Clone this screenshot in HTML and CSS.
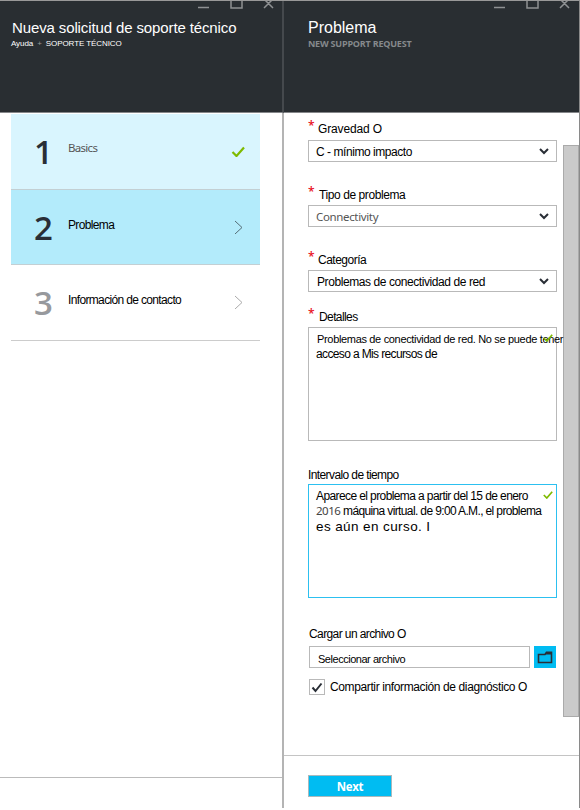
FILE: index.html
```html
<!DOCTYPE html>
<html lang="es">
<head>
<meta charset="utf-8">
<title>Nueva solicitud de soporte técnico</title>
<link rel="stylesheet" href="styles.css">
</head>
<body>
<div class="portal">
  <section class="blade blade-steps">
    <header class="blade-header">
      <svg class="window-controls" width="78" height="10" viewBox="0 0 78 10"><path d="M0 6.500h11M33 0v7h11V0M66 7l9-9M75 7l-9-9"/></svg>
      <h1><span class="t-title">Nueva solicitud de soporte técnico</span></h1>
      <p class="crumbs"><span class="t-help">Ayuda</span> <span class="plus">+</span> <span class="t-support">SOPORTE TÉCNICO</span></p>
    </header>
    <ol class="steps">
      <li class="step step-done"><span class="number">1</span><span class="step-label latin">Basics</span>
        <svg class="mark" width="14" height="12" viewBox="0 0 14 12"><path class="tick" d="M1.500 7l4 4L13 2.500"/></svg></li>
      <li class="step step-current"><span class="number">2</span><span class="step-label t-problem">Problema</span>
        <svg class="mark" width="14" height="14" viewBox="0 0 14 14"><path class="arrow" d="M4 1l7 6.500-7 6.500"/></svg></li>
      <li class="step step-next"><span class="number">3</span><span class="step-label t-contact">Información de contacto</span>
        <svg class="mark" width="14" height="14" viewBox="0 0 14 14"><path class="arrow" d="M4 1l7 6.500-7 6.500"/></svg></li>
    </ol>
    <footer class="steps-footer"></footer>
  </section>
  <section class="blade blade-form">
    <header class="blade-header">
      <svg class="window-controls" width="78" height="10" viewBox="0 0 78 10"><path d="M0 6.500h11M33 0v7h11V0M66 7l9-9M75 7l-9-9"/></svg>
      <h1><span class="t-head">Problema</span></h1>
      <p class="subtitle">NEW SUPPORT REQUEST</p>
    </header>
    <div class="form-body">
      <form class="form">
        <div class="label label-severity"><i>*</i><span class="t-severity">Gravedad O</span></div>
        <div class="select"><span class="t-impact">C - mínimo impacto</span><svg width="10" height="7" viewBox="0 0 10 7"><path d="M1 1l4 4 4-4"/></svg></div>
        <div class="label label-type"><i>*</i><span class="t-type">Tipo de problema</span></div>
        <div class="select"><span class="connectivity">Connectivity</span><svg width="10" height="7" viewBox="0 0 10 7"><path d="M1 1l4 4 4-4"/></svg></div>
        <div class="label label-category"><i>*</i><span class="t-category">Categoría</span></div>
        <div class="select"><span class="t-network">Problemas de conectividad de red</span><svg width="10" height="7" viewBox="0 0 10 7"><path d="M1 1l4 4 4-4"/></svg></div>
        <div class="label label-details"><i>*</i><span class="t-details">Detalles</span></div>
        <div class="textbox textbox-details">
          <svg class="valid" width="10" height="8" viewBox="0 0 10 8"><path class="tick" d="M.8 4l3 3L9.200.8"/></svg>
          <p><span class="t-line1">Problemas de conectividad de red. No se puede tener</span></p>
          <p><span class="t-line2">acceso a Mis recursos de</span></p>
        </div>
        <div class="label label-time"><span class="t-time">Intervalo de tiempo</span></div>
        <div class="textbox textbox-time">
          <svg class="valid" width="10" height="8" viewBox="0 0 10 8"><path class="tick" d="M.8 4l3 3L9.200.8"/></svg>
          <p><span class="t-line3">Aparece el problema a partir del 15 de enero</span></p>
          <p><span class="year">2016</span><span class="t-line4"> máquina virtual. de 9:00 A.M., el problema</span></p>
          <p><span class="t-line5">es aún en curso. I</span></p>
        </div>
        <div class="label label-file"><span class="t-file">Cargar un archivo O</span></div>
        <div class="file-row">
          <div class="file-input"><span class="t-choose">Seleccionar archivo</span></div>
          <div class="folder"><svg width="16" height="13" viewBox="0 0 16 13"><path d="M1.500 3.500h6.500l1.500-2.300h5v10.300h-13z"/><path class="tab" d="M8.500 3.500L10 1h4.500v2.500z"/></svg></div>
        </div>
        <div class="share-row">
          <div class="checkbox"><svg width="12" height="11" viewBox="0 0 12 11"><path d="M1.500 5.500l3 3.500L10.500 1.500"/></svg></div>
          <span class="t-share">Compartir información de diagnóstico O</span>
        </div>
      </form>
      <div class="scrollbar"></div>
    </div>
    <footer class="form-footer"><div class="next">Next</div></footer>
  </section>
</div>
</body>
</html>
```
FILE: styles.css
```css
* { box-sizing: border-box; }
body { margin: 0; background: #fff; color: #000; font: 12px/16px "Liberation Sans", Arial, sans-serif; }
h1, p, ol { margin: 0; padding: 0; }
svg { display: block; fill: none; flex: none; }
.portal { display: flex; width: 580px; height: 808px; border-top: 1px solid #999; border-right: 1px solid #8a8a8a; white-space: nowrap; }
.blade { display: flex; flex-direction: column; }
.blade-steps { width: 284px; border-right: 2px solid #b4b4b4; }
.blade-form { width: 295px; }
.blade-header { position: relative; flex: none; height: 112px; padding: 17px 0 0 12px; background: #292e32; border-bottom: 1px solid #85878a; color: #fff; }
.blade-steps .blade-header { width: 284px; border-right: 2px solid #45494d; }
.blade-form .blade-header { padding-left: 24px; }
.window-controls { position: absolute; top: 0; right: 6px; stroke: #8e9193; stroke-width: 1.500; }
.blade-form .window-controls { right: 7px; }
h1 { font-size: 15px; line-height: 20px; font-weight: 400; }
.blade-form h1 { font-size: 16px; }
.crumbs { margin-left: -1px; font-size: 8px; line-height: 12px; display: flex; }
.plus { margin: 0 4px; color: #999; }
.subtitle { color: #85898c; font: 700 9px/12px "Open Sans", sans-serif; letter-spacing: -.2px; }
.steps { list-style: none; width: 249px; margin: 1px 0 0 11px; flex: 1; }
.step { display: flex; height: 75.500px; padding-right: 15px; border-bottom: 1px solid #c3cfd3; }
.step-done { background: #d9f5fe; }
.step-current { background: #b3ebfb; }
.step-next { border-color: #ccc; }
.step-next .number { color: #97999d; }
.number { width: 57px; padding-left: 23px; font: 600 33px/76px "Open Sans", sans-serif; color: #292e36; }
.step-label { flex: 1; padding-top: 27px; font-size: 12px; line-height: 16px; }
.step-label.latin { font-family: "Noto Sans", sans-serif; font-size: 11.500px; line-height: 14px; letter-spacing: -.7px; color: #555; }
.mark { align-self: center; }
.tick { stroke: #7fba00; stroke-width: 2.200; }
.valid .tick { stroke-width: 1.700; }
.arrow { stroke: #556d76; }
.step-next .arrow { stroke: #aaa; }
.steps-footer { height: 31px; border-top: 1px solid #bbb; }
.form-body { display: flex; flex: 1; justify-content: space-between; }
.form { width: 249px; margin-left: 24px; }
.scrollbar { width: 16px; height: 572px; margin-top: 32px; background: #cacaca; border: 1px solid #aaa; }
.label { display: flex; line-height: 16px; }
.label i { width: 10px; margin-top: -3px; color: #e81123; font: 600 12px/16px "Open Sans", sans-serif; }
.label-severity { height: 27px; padding-top: 8px; }
.label-type { height: 43px; padding-top: 25px; }
.label-category { height: 43px; padding-top: 25px; }
.label-details { height: 35px; padding-top: 17px; }
.label-time { height: 43px; padding-top: 26px; }
.label-file { height: 48px; padding: 28px 0 0 1px; }
.select { display: flex; align-items: center; justify-content: space-between; height: 22px; padding: 1px 7px 0 7px; border: 1px solid #b9b9b9; }
.select svg { stroke: #292e36; stroke-width: 2; }
.connectivity { font-family: "Noto Sans", sans-serif; font-size: 11.500px; letter-spacing: -.35px; color: #555; }
.textbox { position: relative; height: 114px; padding: 4px 0 0 7px; border: 1px solid #b9b9b9; }
.textbox p { height: 15px; line-height: 15px; }
.textbox-time { border-color: #2cc0f0; }
.valid { position: absolute; top: 6px; right: 3px; }
.year { font-family: "Noto Sans", sans-serif; font-size: 11.500px; line-height: 1; letter-spacing: -.5px; color: #444; }
.file-row { display: flex; justify-content: space-between; padding: 0 1px; }
.file-input { width: 221px; height: 22px; padding: 4px 0 0 8px; border: 1px solid #b9b9b9; }
.folder { display: grid; place-items: center; width: 22px; height: 22px; background: #00bcf2; }
.folder svg { stroke: #292e36; stroke-width: 1.600; }
.folder .tab { fill: #292e36; stroke: none; }
.share-row { display: flex; gap: 5px; padding: 11px 0 0 1px; }
.checkbox { display: grid; place-items: center; width: 16px; height: 16px; border: 1px solid #b9b9b9; }
.checkbox svg { stroke: #292e36; stroke-width: 2; }
.form-footer { height: 53px; padding: 19px 0 0 24px; border-top: 1px solid #c4c4c4; }
.next { width: 84px; height: 22px; background: #00bcf2; border: 1px solid #a9b9bd; color: #fff; text-align: center; font: 700 11.500px/21px "Open Sans", sans-serif; letter-spacing: -.3px; }

/* Per-string tracking */
.t-title { letter-spacing: -.12px; }
.t-help, .t-support { letter-spacing: -.08px; }
.t-problem { letter-spacing: -.65px; }
.t-contact { letter-spacing: -.65px; }
.t-severity { letter-spacing: -.15px; }
.t-impact { letter-spacing: -.45px; }
.t-type { letter-spacing: -.42px; margin-left: 1px; }
.t-category { letter-spacing: -.5px; }
.t-network { letter-spacing: -.42px; margin-left: 1px; }
.t-details { letter-spacing: -.6px; margin-left: 1px; }
.t-line1 { font-size: 11px; letter-spacing: -.33px; margin-left: 1px; }
.t-line2 { letter-spacing: -.63px; }
.t-time { letter-spacing: -.6px; }
.t-line3 { letter-spacing: -.6px; }
.t-line4 { letter-spacing: -.63px; }
.t-line5 { font-size: 13.500px; letter-spacing: .4px; }
.t-file { letter-spacing: -.6px; }
.t-choose { font-size: 11px; letter-spacing: -.47px; }
.t-share { letter-spacing: -.38px; }
```
